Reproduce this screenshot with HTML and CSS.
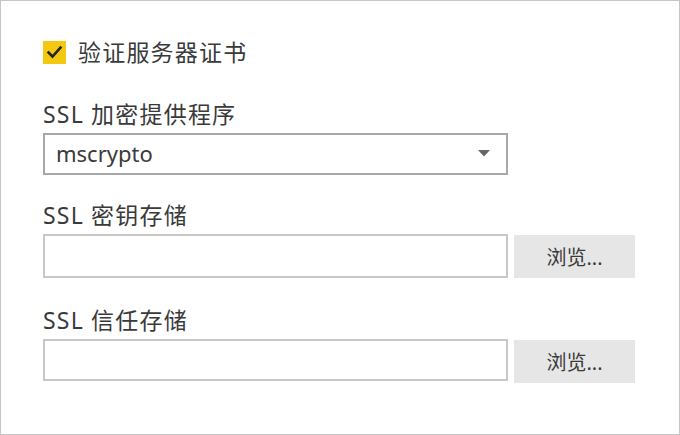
FILE: index.html
```html
<!DOCTYPE html>
<html lang="zh-CN">
<head>
<meta charset="utf-8">
<title>SSL</title>
<link rel="stylesheet" href="styles.css">
</head>
<body>
<div class="frame">
  <label class="check-row">
    <span class="checkbox">
      <svg width="23" height="23" viewBox="0 0 23 23"><path d="M5.5 11.5 L9.5 15.5 L17.5 6.5" fill="none" stroke="#252423" stroke-width="2.6" stroke-linecap="square" stroke-linejoin="miter"/></svg>
    </span>
    <span class="check-label">验证服务器证书</span>
  </label>

  <div class="field first">
    <div class="label">SSL 加密提供程序</div>
    <div class="select">
      <span class="select-value">mscrypto</span>
      <svg class="caret" width="12" height="7" viewBox="0 0 12 7"><path d="M0 0 H12 L6 6.5 Z" fill="#666"/></svg>
    </div>
  </div>

  <div class="field second">
    <div class="label">SSL 密钥存储</div>
    <div class="input-row">
      <div class="input tall"></div>
      <div class="button">浏览...</div>
    </div>
  </div>

  <div class="field third">
    <div class="label">SSL 信任存储</div>
    <div class="input-row">
      <div class="input"></div>
      <div class="button">浏览...</div>
    </div>
  </div>
</div>
</body>
</html>
```

FILE: styles.css
```css
html, body {
  margin: 0;
  padding: 0;
  background: #ffffff;
}
.frame {
  box-sizing: border-box;
  width: 680px;
  height: 435px;
  border: 1px solid #c6c6c6;
  padding: 39px 0 0 42px;
  display: flex;
  flex-direction: column;
  font-family: "Noto Sans", "Noto Sans CJK SC", sans-serif;
  color: #3a3a3a;
}
.check-row {
  display: flex;
  align-items: center;
  height: 24px;
}
.checkbox {
  width: 23px;
  height: 23px;
  background: #f2c811;
  display: flex;
}
.check-label {
  margin-left: 12px;
  font-size: 23px;
  line-height: 24px;
  letter-spacing: 1.2px;
}
.field {
  display: flex;
  flex-direction: column;
}
.field.first { margin-top: 34px; }
.field.second { margin-top: 24px; }
.field.third { margin-top: 26px; }
.label {
  font-size: 23px;
  line-height: 32px;
  height: 32px;
  margin-bottom: 3px;
  letter-spacing: 1.2px;
}
.select {
  box-sizing: border-box;
  width: 465px;
  height: 42px;
  border: 2px solid #a8a8a8;
  display: flex;
  align-items: center;
  justify-content: space-between;
  padding: 0 16px 0 11px;
}
.select-value {
  font-size: 22px;
  color: #3a3a3a;
  position: relative;
  top: -1px;
}
.caret { margin-top: -2px; }
.input-row {
  display: flex;
  gap: 6px;
}
.input {
  box-sizing: border-box;
  width: 465px;
  height: 42px;
  border: 2px solid #c8c8c8;
  background: #fff;
}
.input.tall { height: 44px; }
.button {
  width: 121px;
  height: 43px;
  background: #e6e6e6;
  display: flex;
  align-items: center;
  justify-content: center;
  font-size: 20px;
  color: #3a3a3a;
  margin-top: 1px;
}
```
